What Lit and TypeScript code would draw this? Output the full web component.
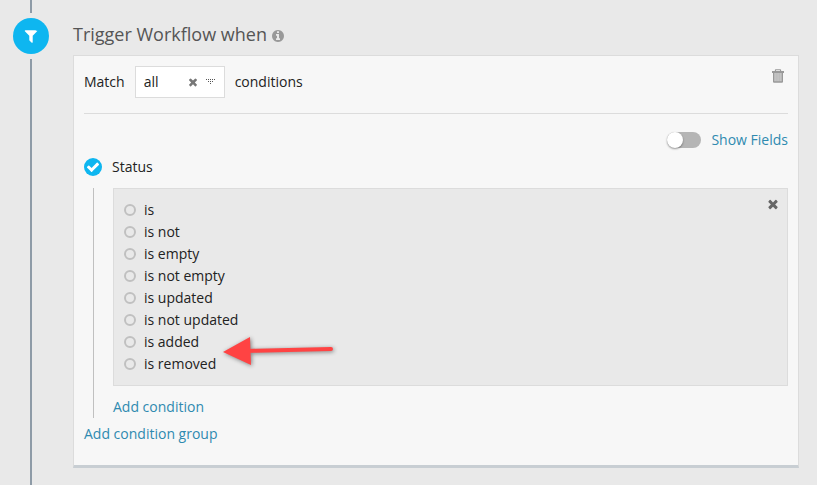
import { LitElement, html, css, svg } from "lit";
import { customElement, property, state } from "lit/decorators.js";

const ICONS: Record<string, string> = {
  info: "M1152 1376v-160q0-14-9-23t-23-9h-96v-512q0-14-9-23t-23-9h-320q-14 0-23 9t-9 23v160q0 14 9 23t23 9h96v320h-96q-14 0-23 9t-9 23v160q0 14 9 23t23 9h448q14 0 23-9t9-23zM1024 480v-160q0-14-9-23t-23-9h-192q-14 0-23 9t-9 23v160q0 14 9 23t23 9h192q14 0 23-9t9-23zM1664 896q0 209-103 385.5T1281.5 1561 896 1664t-385.5-103T231 1281.5 128 896t103-385.5T510.5 231 896 128t385.5 103T1561 510.5 1664 896z",
  trash: "M224 340h320v-110q0-102 102-102h500q102 0 102 102v110h320v210h-112v1000q0 114-114 114H450q-114 0-114-114V550H224zM672 340h448v-60q0-24-24-24H696q-24 0-24 24zM520 560v920h90v-920zM740 560v920h90v-920zM960 560v920h90v-920zM1180 560v920h90v-920z",
  filter: "M1595 295q17 41-14 70l-493 493v742q0 42-39 59-13 5-25 5-27 0-45-19l-256-256q-19-19-19-45v-486l-493-493q-31-29-14-70 17-39 59-39h1152q42 0 59 39z",
  times: "M1490 1322q0 40-28 68l-136 136q-28 28-68 28t-68-28l-294-294-294 294q-28 28-68 28t-68-28l-136-136q-28-28-28-68t28-68l294-294-294-294q-28-28-28-68t28-68l136-136q28-28 68-28t68 28l294 294 294-294q28-28 68-28t68 28l136 136q28 28 28 68t-28 68l-294 294 294 294q28 28 28 68z",
  check: "M1671 566q0 40-28 68l-724 724-136 136q-28 28-68 28t-68-28l-136-136-362-362q-28-28-28-68t28-68l136-136q28-28 68-28t68 28l294 295 656-657q28-28 68-28t68 28l136 136q28 28 28 68z",
};

@customElement("glyph-icon")
export class GlyphIcon extends LitElement {
  @property() name = "";

  static styles = css`
    :host { display: inline-block; width: 14px; height: 14px; flex: none; }
    .glyph { display: block; width: 100%; height: 100%; fill: currentColor; fill-rule: evenodd; }
  `;

  render() {
    return html`<svg class="glyph" viewBox="0 0 1792 1792" aria-hidden="true">
      ${svg`<path d=${ICONS[this.name] ?? ""} />`}
    </svg>`;
  }
}

@customElement("app-root")
export class AppRoot extends LitElement {
  @state() private match = "all";
  @state() private operator = "";

  private readonly operators = [
    "is",
    "is not",
    "is empty",
    "is not empty",
    "is updated",
    "is not updated",
    "is added",
    "is removed",
  ];

  static styles = css`
    :host {
      display: flex;
      box-sizing: border-box;
      min-height: 100vh;
      padding: 0 18px 0 13px;
      gap: 24px;
      background: #e9e9e9;
      color: #222;
      font: 14px/22px "Open Sans", "Noto Sans", sans-serif;
    }
    * { box-sizing: border-box; }
    button { margin: 0; padding: 0; border: 0; background: none; font: inherit; cursor: pointer; }
    input { margin: 0; appearance: none; flex: none; }
    a { color: #2f8ab0; text-decoration: none; }

    .rail { display: flex; flex-direction: column; align-items: center; gap: 5px; flex: none; width: 36px; }
    .line { width: 2px; background: #8e9ba7; }
    .line.top { height: 13px; }
    .line.rest { flex: 1; }
    .step {
      display: flex; align-items: center; justify-content: center;
      width: 36px; height: 36px; border-radius: 50%;
      background: #0eb6f0; color: #fff;
    }
    .step glyph-icon { width: 16px; height: 16px; }

    .main { flex: 1; min-width: 0; }
    .title {
      display: flex; align-items: center; gap: 4px;
      margin: 0; padding: 20px 0 7px;
      color: #555; font-size: 18px; line-height: 28px; font-weight: 400;
    }
    .title glyph-icon { box-sizing: content-box; padding-top: 3px; color: #999; }

    .card {
      padding: 10px 10px 20px;
      border: 1px solid #dcdcdc;
      border-bottom: 3px solid #c8ced3;
      background: #f7f7f7;
    }
    .match { display: flex; align-items: center; gap: 10px; padding-bottom: 15px; border-bottom: 1px solid #dcdcdc; }
    .picker { position: relative; width: 90px; }
    .select {
      display: block; width: 100%; height: 32px; padding: 0 40px 0 8px;
      appearance: none; border: 1px solid #dcdcdc; border-radius: 0;
      background: #fff; color: inherit; font: inherit;
    }
    .clear { position: absolute; top: 10px; left: 52px; display: flex; color: #777; }
    .clear glyph-icon { width: 12px; height: 12px; }
    .caret { position: absolute; top: 13px; right: 10px; width: 9px; height: 5px; fill: #555; pointer-events: none; }
    .delete { align-self: flex-start; display: flex; margin-left: auto; padding: 2px 2px 0 0; color: #999; }
    .delete glyph-icon { width: 16px; height: 16px; }

    .fields { display: flex; align-items: center; justify-content: flex-end; gap: 10px; padding-top: 15px; color: #2f8ab0; }
    .toggle { display: flex; align-items: center; width: 34px; height: 16px; border-radius: 8px; background: #b5b5b5; }
    .toggle::before {
      content: ""; width: 16px; height: 16px; border-radius: 50%;
      background: #fff; box-shadow: 0 1px 2px rgba(0, 0, 0, 0.4);
    }
    .toggle:checked { justify-content: flex-end; background: #0eb6f0; }

    .group { display: flex; align-items: center; gap: 10px; padding: 5px 0 10px; }
    .tick { position: relative; display: flex; width: 18px; height: 18px; color: #fff; }
    .box { width: 18px; height: 18px; border: 2px solid #c0c0c0; border-radius: 50%; }
    .box:checked { border: 0; background: #0eb6f0; }
    .tick glyph-icon { position: absolute; top: 2px; left: 2px; pointer-events: none; }

    .body { margin-left: 9px; padding-left: 19px; border-left: 1px solid #c0c0c0; }
    .panel {
      position: relative; display: flex; justify-content: space-between; align-items: flex-start;
      padding: 10px 7px 10px 10px; border: 1px solid #dcdcdc; background: #e9e9e9;
    }
    .options { margin: 0; padding: 0; border: 0; }
    .option { display: flex; align-items: center; gap: 8px; }
    .radio { width: 12px; height: 12px; border: 2px solid #c0c0c0; border-radius: 50%; }
    .radio:checked { border-color: #0eb6f0; background: #0eb6f0; }
    .close { display: flex; margin-top: -2px; color: #666; }
    .pointer {
      position: absolute; left: 106px; top: 142px; width: 120px; height: 40px;
      overflow: visible; pointer-events: none;
      filter: drop-shadow(1px 1px 2px rgba(0, 0, 0, 0.45));
    }
    .add { padding: 10px 0 0; }
    .add-group { padding-top: 5px; }
  `;

  render() {
    return html`
      <div class="rail">
        <div class="line top"></div>
        <div class="step"><glyph-icon name="filter"></glyph-icon></div>
        <div class="line rest"></div>
      </div>
      <main class="main">
        <h1 class="title">Trigger Workflow when <glyph-icon name="info"></glyph-icon></h1>
        <section class="card">
          <div class="match">
            <label for="match">Match</label>
            <div class="picker">
              <select
                id="match"
                class="select"
                .value=${this.match}
                @change=${(e: Event) => (this.match = (e.target as HTMLSelectElement).value)}
              >
                <option value="all">all</option>
                <option value="any">any</option>
              </select>
              <button class="clear" aria-label="Clear" @click=${() => (this.match = "all")}>
                <glyph-icon name="times"></glyph-icon>
              </button>
              <svg class="caret" viewBox="0 0 9 5" shape-rendering="crispEdges" aria-hidden="true">
                <path d="M0 0h1v1h-1zM2 0h1v1h-1zM4 0h1v1h-1zM6 0h1v1h-1zM8 0h1v1h-1zM2 2h1v1h-1zM4 2h1v1h-1zM6 2h1v1h-1zM4 4h1v1h-1z" />
              </svg>
            </div>
            <span>conditions</span>
            <button class="delete" aria-label="Delete"><glyph-icon name="trash"></glyph-icon></button>
          </div>

          <div class="fields">
            <input id="fields" class="toggle" type="checkbox" role="switch" />
            <label for="fields">Show Fields</label>
          </div>

          <div class="group">
            <span class="tick">
              <input id="status" class="box" type="checkbox" checked />
              <glyph-icon name="check"></glyph-icon>
            </span>
            <label for="status">Status</label>
          </div>

          <div class="body">
            <div class="panel">
              <fieldset class="options" aria-label="Status condition">
                ${this.operators.map(
                  (name) => html`<label class="option">
                    <input
                      class="radio"
                      type="radio"
                      name="operator"
                      .checked=${this.operator === name}
                      @change=${() => (this.operator = name)}
                    />${name}
                  </label>`
                )}
              </fieldset>
              <button class="close" aria-label="Close"><glyph-icon name="times"></glyph-icon></button>
              <svg class="pointer" viewBox="0 0 120 40" aria-hidden="true">
                <path d="M26 20L111 18" stroke="#ff4343" stroke-width="4" stroke-linecap="round" />
                <path d="M3 21L30 6L31 34Z" fill="#ff4343" />
              </svg>
            </div>
            <div class="add"><a href="#condition">Add condition</a></div>
          </div>
          <div class="add-group"><a href="#group">Add condition group</a></div>
        </section>
      </main>
    `;
  }
}
